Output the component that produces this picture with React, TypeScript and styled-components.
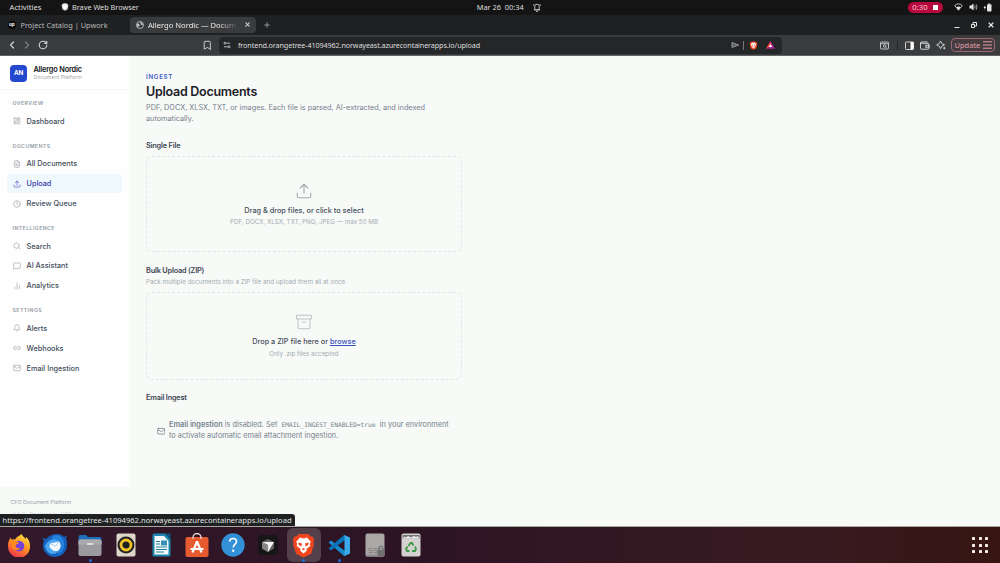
import React, { FC, ReactNode } from 'react';
import styled, { createGlobalStyle } from 'styled-components';
import {
  Archive, BarChart2, Bell, Bookmark, ChevronLeft, ChevronRight, Clock, FileText,
  LayoutDashboard, Link2, Mail, MessageSquare, Plus, RotateCw, Search, Upload, X,
} from 'lucide-react';

const colours = {
  primary: '#2449cf',
  text: '#1a2027',
  body: '#46505d',
  muted: '#74808b',
  faint: '#a3abb2',
  page: '#f8faf8',
};

const GlobalStyle = createGlobalStyle`
  * {
    box-sizing: border-box;
  }

  body {
    margin: 0;
    overflow: hidden;
  }

  svg {
    display: block;
    flex: none;
  }
`;

const Desktop = styled.div`
  width: 1000px;
  height: 563px;
  display: grid;
  grid-template-rows: 15px 20px 21px 471px 36px;
  font-family: 'Noto Sans', sans-serif;
  overflow: hidden;
`;

/* ---------- Top bar ---------- */

const TopBar = styled.div`
  display: grid;
  grid-template-columns: 1fr auto 1fr;
  align-items: center;
  padding: 0 8px 1px 9.5px;
  background: #141414;
  color: #dedede;
  font-size: 7.7px;
  line-height: 14px;
`;

const TopGroup = styled.div<{ $gap: number; $end?: boolean }>`
  display: flex;
  align-items: center;
  gap: ${p => p.$gap}px;
  justify-content: ${p => (p.$end ? 'flex-end' : 'flex-start')};
  white-space: nowrap;
`;

const Activities = styled.span`
  width: 51px;
`;

const AppName = styled.span`
  font-size: 7.3px;
`;

const TimeLabel = styled.span`
  margin-left: 16px;
  font-size: 7.4px;
`;

const Recording = styled.div`
  display: flex;
  align-items: center;
  justify-content: center;
  gap: 5px;
  width: 35px;
  height: 11px;
  margin-right: 6px;
  border-radius: 6px;
  background: #b9093c;
  color: #f3cbd5;

  &:after {
    content: '';
    width: 5px;
    height: 5px;
    background: #fff;
  }
`;

/* ---------- Browser ---------- */

const TabStrip = styled.div`
  display: flex;
  align-items: center;
  padding: 0 5px 0 7px;
  background: #1e2021;
  white-space: nowrap;
`;

const Tab = styled.div<{ $active?: boolean }>`
  display: flex;
  align-items: center;
  gap: ${p => (p.$active ? 4 : 4.5)}px;
  width: ${p => (p.$active ? 126 : 123)}px;
  height: 16px;
  padding: 0 ${p => (p.$active ? '5px 0 6px' : '1px')};
  margin-bottom: 1px;
  border-radius: 4px;
  background: ${p => (p.$active ? '#3a3b3d' : 'none')};
  color: ${p => (p.$active ? '#ebebeb' : '#b9babb')};
`;

const TabTitle = styled.span<{ $fade?: boolean }>`
  flex: 1;
  font-size: ${p => (p.$fade ? 7.6 : 7.35)}px;
  mask-image: ${p => (p.$fade ? 'linear-gradient(90deg, #000 78%, transparent 98%)' : 'none')};
`;

const NewTab = styled.div`
  flex: 1;
  padding-left: 6.5px;
  color: #a2a3a4;
`;

const WindowControls = styled.div`
  display: flex;
  gap: 9px;
  color: #e6e6e6;
`;

const Toolbar = styled.div`
  display: flex;
  align-items: center;
  padding: 0 5px 0 4px;
  background: #3a3b3d;
  border-bottom: 1px solid #606163;
  color: #cfd0d1;
`;

const Tool = styled.div<{ $width?: number; $dim?: boolean }>`
  width: ${p => p.$width || 15.5}px;
  display: flex;
  justify-content: center;
  opacity: ${p => (p.$dim ? 0.45 : 1)};
`;

const Spacer = styled.div`
  flex: 1;
`;

const NavButtons = styled.div`
  display: flex;
  align-items: center;
  width: 195px;
`;

const AddressBar = styled.div`
  display: flex;
  align-items: center;
  width: 563px;
  height: 17px;
  margin-left: 4px;
  padding-left: 4px;
  border-radius: 4px;
  background: #252628;
  color: #dcddde;
  font-size: 7.2px;
`;

const Url = styled.span`
  flex: 1;
  margin-left: 7.5px;
  letter-spacing: -0.1px;
`;

const Divider = styled.div<{ $color: string }>`
  width: 1px;
  height: 9px;
  margin: 0 4px;
  background: ${p => p.$color};
`;

const UpdateButton = styled.div`
  display: flex;
  align-items: center;
  justify-content: space-between;
  width: 44.5px;
  height: 14.5px;
  margin-left: 2px;
  padding: 0 2.5px 0 3px;
  border: 1px solid #9b6770;
  border-radius: 4px;
  background: #443b3f;
  color: #e2a0ac;
  font-size: 7.5px;
`;

/* ---------- Page ---------- */

const Page = styled.div`
  position: relative;
  display: flex;
  background: ${colours.page};
  border-bottom: 1px solid #a9a9a4;
  font-family: Inter, sans-serif;
`;

const Sidebar = styled.div`
  width: 128.5px;
  display: flex;
  flex-direction: column;
`;

const SidebarPanel = styled.div`
  height: 431px;
  background: #fefefe;
`;

const Brand = styled.div`
  display: flex;
  align-items: center;
  gap: 6.5px;
  height: 34px;
  padding: 1.5px 10.4px 0;
  border-bottom: 1px solid #f3f5f5;
`;

const BrandLogo = styled.div`
  width: 16.5px;
  height: 17px;
  border-radius: 4px;
  background: ${colours.primary};
  color: #fff;
  font-size: 6.3px;
  font-weight: 700;
  line-height: 17px;
  text-align: center;
`;

const BrandName = styled.div`
  color: #111418;
  font-size: 7.35px;
  font-weight: 600;
  line-height: 8px;
  letter-spacing: -0.17px;
`;

const BrandTag = styled.div`
  color: #a7adb4;
  font-size: 5.3px;
  line-height: 6.5px;
`;

const NavSection = styled.div`
  padding: 0 6.5px;
  margin-top: 8.3px;

  & + & {
    margin-top: 10.2px;
  }
`;

const NavHeading = styled.div`
  height: 13.6px;
  padding-left: 6px;
  color: #929ba4;
  font-size: 5.2px;
  font-weight: 600;
  line-height: 10px;
  letter-spacing: 0.44px;
`;

const NavItems = styled.div`
  display: grid;
  grid-auto-rows: 18.8px;
  row-gap: 1.05px;
`;

const NavItem = styled.div<{ $active?: boolean }>`
  display: flex;
  align-items: center;
  gap: 6px;
  padding-left: 6px;
  border-radius: 4px;
  background: ${p => (p.$active ? '#eff8fd' : 'none')};
  color: ${p => (p.$active ? '#3440a8' : colours.body)};
  font-size: 7.3px;
  font-weight: 500;

  svg {
    color: ${p => (p.$active ? '#4a55c0' : '#a0a6ac')};
  }
`;

const SidebarFooter = styled.div`
  padding: 9px 0 0 10.5px;
  color: #98a1a9;
  font-size: 5.3px;
  line-height: 12px;
`;

const Version = styled.div`
  color: #d3d7d9;
`;

const Content = styled.div`
  width: 334px;
  padding: 16px 0 0 17.5px;
`;

const Eyebrow = styled.div`
  color: #3e5cc8;
  font-size: 6.2px;
  font-weight: 600;
  line-height: 10px;
  letter-spacing: 0.7px;
`;

const Title = styled.h1`
  margin: 1px 0 0;
  color: ${colours.text};
  font-size: 12.5px;
  font-weight: 600;
  line-height: 18px;
  letter-spacing: -0.26px;
`;

const Lead = styled.p`
  margin: 1.7px 0 0;
  color: ${colours.muted};
  font-size: 7.3px;
  line-height: 10.9px;
`;

const SectionTitle = styled.h2<{ $top: number }>`
  margin: ${p => p.$top}px 0 0;
  color: #3b4653;
  font-size: 7.3px;
  font-weight: 600;
  line-height: 10px;
  letter-spacing: -0.17px;
`;

const Hint = styled.div`
  margin-top: 1.5px;
  color: ${colours.faint};
  font-size: 6.3px;
  line-height: 10px;
`;

const DropZone = styled.div<{ $height: number; $top: number }>`
  display: flex;
  flex-direction: column;
  align-items: center;
  width: 316px;
  height: ${p => p.$height}px;
  margin-top: ${p => p.$top}px;
  border: 1px dashed #e3e6e6;
  border-radius: 6px;
  color: #a9adb1;
`;

const DropIcon = styled.div<{ $top: number }>`
  margin-top: ${p => p.$top}px;
`;

const DropTitle = styled.div`
  margin-top: 6px;
  color: ${colours.body};
  font-size: 7.3px;
  font-weight: 500;
  line-height: 10px;
`;

const Browse = styled.span`
  color: #3850bd;
  text-decoration: underline;
`;

const DropHint = styled.div`
  margin-top: 1.5px;
  color: ${colours.faint};
  font-size: 6.25px;
  line-height: 10px;
`;

const Notice = styled.div`
  display: flex;
  align-items: center;
  gap: 4px;
  margin-top: 17.5px;
  padding-left: 10.5px;
  color: ${colours.muted};
  font-size: 7.33px;
  line-height: 10.8px;
  white-space: nowrap;

  b {
    font-weight: 600;
  }

  code {
    margin: 0 2.2px;
    font-family: 'DejaVu Sans Mono', monospace;
    font-size: 6.3px;
    letter-spacing: -0.03px;
  }
`;

const LinkPreview = styled.div`
  position: absolute;
  left: 0;
  bottom: 0;
  width: 295px;
  height: 12px;
  padding-left: 2.5px;
  border-radius: 0 3px 0 0;
  background: #1e2022;
  color: #e3e4e4;
  font-family: 'Noto Sans', sans-serif;
  font-size: 7.6px;
  line-height: 12.5px;
  white-space: nowrap;
`;

/* ---------- Dock ---------- */

const DockBar = styled.div`
  display: flex;
  align-items: center;
  padding: 0 12px 0 2.3px;
  background: linear-gradient(90deg, #32182a 0%, #2d1423 42%, #381b22 80%, #361511 100%);
`;

const DockSlot = styled.div<{ $active?: boolean; $running?: boolean }>`
  position: relative;
  display: flex;
  justify-content: center;
  align-items: center;
  width: 33.6px;
  height: 34px;
  margin-right: 2px;
  border-radius: 6px;
  background: ${p => (p.$active ? '#54404b' : 'none')};

  &:after {
    content: '';
    position: absolute;
    bottom: 0.5px;
    width: 3px;
    height: 3px;
    border-radius: 50%;
    background: ${p => (p.$running ? '#1d72d8' : 'transparent')};
  }
`;

const AppGrid = styled.div`
  display: grid;
  grid-template-columns: repeat(3, 3px);
  gap: 3.3px;

  i {
    width: 3px;
    height: 3px;
    border-radius: 0.5px;
    background: #f3ebe8;
  }
`;

const BraveLion: FC<{ size: number; mono?: boolean }> = ({ size, mono }) => (
  <svg width={size} height={size} viewBox="0 0 24 24">
    <path d="M7.5 1h9l2.2 2.2 2.3.3 1.2 3.2-.7 2.3.5 1.8-2.6 9L12 23.5l-7.1-3.7L2 10.800l.5-1.800-.7-2.300L3 3.500l2.300-.3z" fill={mono ? '#d8d8d8' : '#f1461d'} />
    <path d="M12 5.200l3.300-.9 3.700 4-1 2.200.6 2-3.700 2.600.2 1.900-3.100 2.700-3.100-2.700.2-1.900-3.700-2.600.6-2-1-2.200 3.700-4z" fill="#fff" />
    {!mono && <path d="M7 9l3.500 1-.5 3-2.500-1.500zM17 9l-3.500 1 .5 3 2.500-1.500zM10.300 15.300l1.700-1 1.700 1-1.700 1.300z" fill="#f1461d" />}
  </svg>
);

const Firefox = () => (
  <svg width="24" height="24" viewBox="0 0 24 24">
    <defs>
      <linearGradient id="fox" x1="0.8" y1="0" x2="0.3" y2="1">
        <stop offset="0" stopColor="#ffe14a" />
        <stop offset="0.45" stopColor="#ff9a1f" />
        <stop offset="1" stopColor="#f0304f" />
      </linearGradient>
    </defs>
    <path d="M14.500 1c1 2.500 3 3.200 4.300 5 .3-.9.2-1.600 0-2.200 3.200 2.500 4.600 6.500 4.200 10.200A11 11 0 0 1 1 13.500C.8 9.500 2 6.500 4 4.500c0 1 .2 1.600.6 2.200C5.500 6 7 6 8 6.400 9.500 3.500 12 3.500 14.500 1z" fill="url(#fox)" />
    <circle cx="12" cy="13" r="5.300" fill="#7541d8" />
    <path d="M4.500 8c3-.8 5 1 7.500 1.500-.5 1.700-3 1.500-3.500 3-.3 2 2.500 3.500 5 2.500-2 3.500-8 2.500-9-2z" fill="#ff8b20" />
  </svg>
);

const Thunderbird = () => (
  <svg width="26" height="25" viewBox="0 0 26 25">
    <path d="M10 2c4-2 10-.5 12 2l3-1.500-1 3c2 5 1 12-3 15.500-5 4-13 4-17-1C1 17 0 12 2 8L.500 4.500 4 6C6 4 7 3 10 2z" fill="#1460bd" />
    <path d="M11 3c5-2 10 1 11 6 1 6-2 10-6 13 2-5-2-5-5-9-2-3-2-7 0-10z" fill="#2482dc" />
    <path d="M3 13c1.500-4 5-7 10-6.500 4 .5 6 4 5 8-1 4-4 7-8 6.500C6 20.500 4 17 3 13z" fill="#4ba4ee" />
    <path d="M8 10.500l9-2c2.500 3 2 7-1 9-3.500 1.500-6.500-.5-8.500-3.500z" fill="#f6f9fd" />
    <path d="M8 10.500l5.500 2.700L17 8.500" fill="none" stroke="#9bbbe0" strokeWidth=".8" />
  </svg>
);

const Files = () => (
  <svg width="24" height="24" viewBox="0 0 24 24">
    <path d="M.5 4Q.5 2 2.500 2H8l2 2h11.500q2 0 2 2v6H.5z" fill="#1e6fbd" />
    <rect x=".5" y="6.500" width="23" height="16.500" rx="2" fill="#9b9a9f" />
    <path d="M.5 8.500q0-2 2-2h19q2 0 2 2v3H.5z" fill="#aaa9ae" />
    <path d="M9 11h6" stroke="#efefef" strokeWidth="1.500" />
  </svg>
);

const Rhythmbox = () => (
  <svg width="20" height="24" viewBox="0 0 20 24">
    <rect x=".5" y=".5" width="19" height="23" rx="2" fill="#ded6c9" />
    <circle cx="10" cy="12" r="8.500" fill="#222" />
    <circle cx="10" cy="12" r="5" fill="none" stroke="#efc329" strokeWidth="2.800" />
    <circle cx="10" cy="12" r="2.200" fill="#202020" />
  </svg>
);

const Writer = () => (
  <svg width="19" height="24" viewBox="0 0 19 24">
    <path d="M1.500.5H13l5.500 6v15.500q0 1.500-1.500 1.500H2q-1.500 0-1.500-1.500V2z" fill="#1e87af" />
    <path d="M2.500 3h9.500l4.500 5v13.500h-14z" fill="#f4fafb" />
    <path d="M13 .5h5.500V6.500z" fill="#0c5574" />
    <path d="M4 8.500h4M4 11h4M4 14h11M4 16.500h11M4 19h8" stroke="#267e9c" strokeWidth="1.200" />
    <rect x="9" y="7.500" width="6" height="5" fill="#338fb3" />
  </svg>
);

const Software = () => (
  <svg width="24" height="25" viewBox="0 0 24 25">
    <rect x=".5" y="4" width="23" height="20" rx="2" fill="#e75a30" />
    <path d="M8 6V4.500a4 4 0 0 1 8 0V6" fill="none" stroke="#eee0d9" strokeWidth="1.300" />
    <path d="M12 8.500L7.500 19.500M12 8.500l4.500 11M5.500 16h13" fill="none" stroke="#fff" strokeWidth="2.200" />
  </svg>
);

const Help = () => (
  <svg width="24" height="24" viewBox="0 0 24 24">
    <circle cx="12" cy="12" r="11.700" fill="#3290d6" />
    <path d="M8.600 8.600C8.700 6.500 10 5.500 12 5.500s3.500 1.200 3.500 3c0 2.700-3.300 3-3.300 6" fill="none" stroke="#fff" strokeWidth="1.600" />
    <circle cx="12.200" cy="17.800" r="1.200" fill="#fff" />
  </svg>
);

const Cursor = () => (
  <svg width="20" height="20" viewBox="0 0 20 20">
    <rect width="20" height="20" rx="4" fill="#161616" />
    <path d="M10 4l6 3v6.500L10 17l-6-3.500V7z" fill="#626262" />
    <path d="M4 7h12l-6 10v-7z" fill="#f1f1f1" />
    <path d="M4 7l6 3v7l-6-3.500z" fill="#858585" />
  </svg>
);

const VsCode = () => (
  <svg width="23" height="23" viewBox="0 0 23 23">
    <path d="M1 8l2-1.500L17 17v5l-1 0L1 9z" fill="#1689cf" />
    <path d="M1 15l2 1.500L17 6V1l-1 0L1 14z" fill="#0872b6" />
    <path d="M16.500 1L22 3.500v16L16.500 22z" fill="#38aaec" />
  </svg>
);

const Disk = () => (
  <svg width="20" height="24" viewBox="0 0 20 24">
    <rect x=".5" y=".5" width="19" height="23" rx="2" fill="#aaa8a7" />
    <rect x=".5" y="21.500" width="19" height="2" rx="1" fill="#918f8f" />
    <text x="3" y="20" fontFamily="Liberation Sans, sans-serif" fontSize="7.500" fill="#747474">SSD</text>
    <path d="M14 17v-2a2 2 0 0 1 4 0v2" fill="none" stroke="#696969" />
    <rect x="12.500" y="17" width="7" height="6" fill="#707070" />
  </svg>
);

const Trash = () => (
  <svg width="20" height="24" viewBox="0 0 20 24">
    <rect x=".5" y=".5" width="19" height="23" rx="2" fill="#d4d2d0" />
    <path d="M1.500 2h17v3.500h-17z" fill="#737171" />
    <path d="M2 5.500l1-2 2 1 2-1.500 3 1.500 3-1.500 2 1 2-1 1 2.500z" fill="#eee" />
    <g fill="none" stroke="#3d9b43" strokeWidth="1.800">
      <path d="M7.500 13l2-3h1.500l1.500 2.500" />
      <path d="M14 13.500l1 2.500-1 2h-3" />
      <path d="M8.500 18H6l-1-2 1.500-2.500" />
    </g>
  </svg>
);

const dockApps: { icon: ReactNode; active?: boolean; running?: boolean }[] = [
  { icon: <Firefox /> },
  { icon: <Thunderbird /> },
  { icon: <Files />, running: true },
  { icon: <Rhythmbox /> },
  { icon: <Writer /> },
  { icon: <Software /> },
  { icon: <Help /> },
  { icon: <Cursor /> },
  { icon: <BraveLion size={25} />, active: true, running: true },
  { icon: <VsCode />, running: true },
  { icon: <Disk /> },
  { icon: <Trash /> },
];

const navigation = [
  { heading: 'OVERVIEW', items: [{ label: 'Dashboard', Icon: LayoutDashboard }] },
  {
    heading: 'DOCUMENTS',
    items: [
      { label: 'All Documents', Icon: FileText },
      { label: 'Upload', Icon: Upload, active: true },
      { label: 'Review Queue', Icon: Clock },
    ],
  },
  {
    heading: 'INTELLIGENCE',
    items: [
      { label: 'Search', Icon: Search },
      { label: 'AI Assistant', Icon: MessageSquare },
      { label: 'Analytics', Icon: BarChart2 },
    ],
  },
  {
    heading: 'SETTINGS',
    items: [
      { label: 'Alerts', Icon: Bell },
      { label: 'Webhooks', Icon: Link2 },
      { label: 'Email Ingestion', Icon: Mail },
    ],
  },
];

const SystemBar: FC = () => (
  <TopBar>
    <TopGroup $gap={0}>
      <Activities>Activities</Activities>
      <TopGroup $gap={3.5}>
        <BraveLion size={8} mono />
        <AppName>Brave Web Browser</AppName>
      </TopGroup>
    </TopGroup>
    <TopGroup $gap={9}>
      <TimeLabel>Mar 26&nbsp; 00:34</TimeLabel>
      <svg width="8" height="9" viewBox="0 0 8 9" fill="none" stroke="#c8c8c8">
        <path d="M1.800 6.800V3q0-1.700 2.200-1.700T6.200 3v3.800zM.8 6.800h6.400M3 8.400h2M1 1.200L.5 2.700M7 1.200l.5 1.500" strokeWidth=".9" />
      </svg>
    </TopGroup>
    <TopGroup $gap={5.5} $end>
      <Recording>0:30</Recording>
      <svg width="9" height="8" viewBox="0 0 9 8">
        <path d="M.7 2.500Q4.500-.8 8.300 2.500L4.500 7.200z" fill="none" stroke="#e8e8e8" strokeWidth=".8" />
        <path d="M2.300 4.200q2.200-1.500 4.400 0L4.500 7.300z" fill="#e8e8e8" />
      </svg>
      <svg width="9" height="8" viewBox="0 0 9 8">
        <path d="M.5 2.500h1.700L4.500.5v7L2.200 5.500H.5z" fill="#e8e8e8" />
        <path d="M5.600 2.500q1 1.500 0 3M7 1.200q2 2.800 0 5.600" fill="none" stroke="#c0c0c0" strokeWidth=".8" />
      </svg>
      <svg width="9" height="9" viewBox="0 0 9 9">
        <rect x="4" y="1.200" width="4.500" height="7.300" rx="1" fill="#e8e8e8" />
        <path d="M5.200.4h2v1h-2zM2.300 2L.5 5h1.200l-.5 2.200L3.200 4H2z" fill="#e8e8e8" />
      </svg>
    </TopGroup>
  </TopBar>
);

const BrowserTabs: FC = () => (
  <TabStrip>
    <Tab>
      <svg width="8" height="8" viewBox="0 0 8 8">
        <circle cx="4" cy="4" r="4" fill="#080808" />
        <text x="1" y="5.300" fontFamily="Inter, sans-serif" fontSize="4.500" fontWeight="700" fill="#fff">up</text>
      </svg>
      <TabTitle>Project Catalog | Upwork</TabTitle>
    </Tab>
    <Tab $active>
      <svg width="8" height="8" viewBox="0 0 8 8">
        <circle cx="4" cy="4" r="3.500" fill="none" stroke="#b8babc" strokeWidth=".9" />
        <path d="M1 2.500l2 .3 1 1.400-1.500 1L2 6.800.7 5zM4.200.8l2 1 .9 2-1.700.4-.8-1.400z" fill="#b8babc" />
      </svg>
      <TabTitle $fade>Allergo Nordic — Docum</TabTitle>
      <X size={7} strokeWidth={3.5} />
    </Tab>
    <NewTab><Plus size={8} strokeWidth={2.5} /></NewTab>
    <WindowControls>
      <svg width="8" height="8" viewBox="0 0 8 8"><path d="M1.500 6.500h5" stroke="currentColor" /></svg>
      <svg width="8" height="8" viewBox="0 0 8 8" fill="none" stroke="currentColor">
        <path d="M1.500 3.500h3v3h-3zM3 3V1.500h3.500V5H5" />
      </svg>
      <X size={8} strokeWidth={3.5} />
    </WindowControls>
  </TabStrip>
);

const BrowserToolbar: FC = () => (
  <Toolbar>
    <NavButtons>
      <Tool><ChevronLeft size={12} strokeWidth={2.5} /></Tool>
      <Tool $dim><ChevronRight size={12} strokeWidth={2.5} /></Tool>
      <Tool><RotateCw size={10} strokeWidth={2.7} /></Tool>
    </NavButtons>
    <Tool><Bookmark size={10.5} strokeWidth={2.2} /></Tool>
    <AddressBar>
      <svg width="8" height="8" viewBox="0 0 8 8" fill="none" stroke="#b9babb">
        <circle cx="2" cy="2.200" r="1" /><path d="M3.500 2.200h3.500M1 5.800h3.500" /><circle cx="6" cy="5.800" r="1" />
      </svg>
      <Url>frontend.orangetree-41094962.norwayeast.azurecontainerapps.io/upload</Url>
      <svg width="8" height="8" viewBox="0 0 8 8" fill="none" stroke="#b9babb" strokeWidth=".8">
        <path d="M1 1.500L7.500 4 1 6.500zM1 4h4" />
      </svg>
      <Divider $color="#777" />
      <Tool $width={11}><BraveLion size={9} /></Tool>
      <Tool $width={23}>
        <svg width="9" height="8" viewBox="0 0 9 8">
          <path d="M4.500 0L9 7.800H0z" fill="#a8248f" />
          <path d="M4.500 0L0 7.800l4.500-3z" fill="#f0452d" />
          <path d="M4.500 3l1.800 3H2.700z" fill="#fff" />
        </svg>
      </Tool>
    </AddressBar>
    <Spacer />
    <Tool $width={16}>
      <svg width="9" height="9" viewBox="0 0 9 9" fill="none" stroke="currentColor" strokeWidth=".9">
        <rect x=".5" y="1" width="8" height="7" rx=".8" /><path d="M.5 2.700h8M6 6.300l1 1" /><circle cx="4.700" cy="5" r="1.300" />
      </svg>
    </Tool>
    <Divider $color="#222" />
    <Tool $width={16}>
      <svg width="9" height="9" viewBox="0 0 9 9">
        <rect x=".5" y="1" width="8" height="7.500" rx=".8" fill="none" stroke="currentColor" />
        <path d="M5.500 1H8.500v7.500h-3z" fill="#fff" />
      </svg>
    </Tool>
    <Tool>
      <svg width="10" height="9" viewBox="0 0 10 9" fill="none" stroke="currentColor">
        <path d="M.5 2V7.500q0 .7.700.7h7q.7 0 .7-.7V3q0-.7-.7-.7H1Q.5 2.300.5 1.700t.6-.7h6.600" />
        <rect x="5.800" y="4.200" width="3.200" height="2" />
      </svg>
    </Tool>
    <Tool>
      <svg width="10" height="10" viewBox="0 0 10 10" fill="none" stroke="currentColor">
        <path d="M4.500 1l1.300 2.500L8.500 4.800 5.800 6.200 4.500 8.600 3.200 6.200.7 4.800l2.500-1.300z" />
        <path d="M8.300 6.800v2.600M7 8.100h2.600" strokeWidth=".9" />
      </svg>
    </Tool>
    <UpdateButton>
      Update
      <svg width="9" height="8" viewBox="0 0 9 8" stroke="currentColor"><path d="M0 .8h9M0 4h9M0 7.200h9" /></svg>
    </UpdateButton>
  </Toolbar>
);

const SideNav: FC = () => (
  <Sidebar>
    <SidebarPanel>
      <Brand>
        <BrandLogo>AN</BrandLogo>
        <div>
          <BrandName>Allergo Nordic</BrandName>
          <BrandTag>Document Platform</BrandTag>
        </div>
      </Brand>
      {navigation.map(({ heading, items }) => (
        <NavSection key={heading}>
          <NavHeading>{heading}</NavHeading>
          <NavItems>
            {items.map(({ label, Icon, ...item }) => (
              <NavItem key={label} $active={'active' in item}>
                <Icon size={8} strokeWidth={2} />
                {label}
              </NavItem>
            ))}
          </NavItems>
        </NavSection>
      ))}
    </SidebarPanel>
    <SidebarFooter>
      <div>CFO Document Platform</div>
      <Version>v1.0.0 · Powered by GPT-4o</Version>
    </SidebarFooter>
  </Sidebar>
);

const UploadPage: FC = () => (
  <Content>
    <Eyebrow>INGEST</Eyebrow>
    <Title>Upload Documents</Title>
    <Lead>
      PDF, DOCX, XLSX, TXT, or images. Each file is parsed, AI-extracted, and indexed
      automatically.
    </Lead>

    <SectionTitle $top={16}>Single File</SectionTitle>
    <DropZone $height={96.5} $top={5.4}>
      <DropIcon $top={25}><Upload size={18} strokeWidth={1.5} /></DropIcon>
      <DropTitle>Drag &amp; drop files, or click to select</DropTitle>
      <DropHint>PDF, DOCX, XLSX, TXT, PNG, JPEG — max 50 MB</DropHint>
    </DropZone>

    <SectionTitle $top={13.2}>Bulk Upload (ZIP)</SectionTitle>
    <Hint>Pack multiple documents into a ZIP file and upload them all at once.</Hint>
    <DropZone $height={87.5} $top={5}>
      <DropIcon $top={20.4}><Archive size={18} strokeWidth={1.4} color="#c0c3c6" /></DropIcon>
      <DropTitle>Drop a ZIP file here or <Browse>browse</Browse></DropTitle>
      <DropHint>Only .zip files accepted</DropHint>
    </DropZone>

    <SectionTitle $top={13.2}>Email Ingest</SectionTitle>
    <Notice>
      <Mail size={8.5} strokeWidth={2.2} />
      <div>
        <b>Email ingestion</b> is disabled. Set <code>EMAIL_INGEST_ENABLED=true</code> in your environment
        <br />
        to activate automatic email attachment ingestion.
      </div>
    </Notice>
  </Content>
);

const App: FC = () => {
  return (
    <>
      <GlobalStyle />
      <Desktop>
        <SystemBar />
        <BrowserTabs />
        <BrowserToolbar />
        <Page>
          <SideNav />
          <UploadPage />
          <LinkPreview>https://frontend.orangetree-41094962.norwayeast.azurecontainerapps.io/upload</LinkPreview>
        </Page>
        <DockBar>
          {dockApps.map(({ icon, active, running }, i) => (
            <DockSlot key={i} $active={active} $running={running}>{icon}</DockSlot>
          ))}
          <Spacer />
          <AppGrid>
            {Array.from({ length: 9 }, (_, i) => <i key={i} />)}
          </AppGrid>
        </DockBar>
      </Desktop>
    </>
  );
};

export default App;
